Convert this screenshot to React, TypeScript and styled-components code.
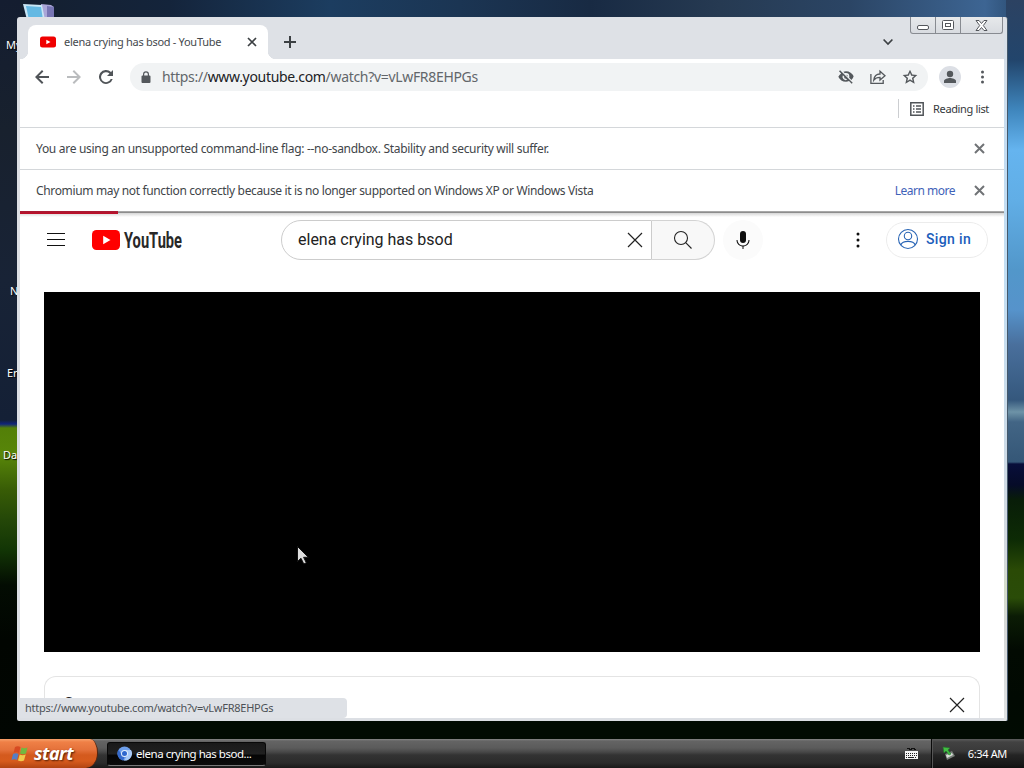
import type { ReactNode } from 'react';
import styled, { createGlobalStyle } from 'styled-components';

const uiFont = `'Noto Sans', 'Open Sans', sans-serif`;

const GlobalStyle = createGlobalStyle`
  * {
    box-sizing: border-box;
  }

  body {
    margin: 0;
    overflow: hidden;
    background: #000;
    font-family: ${uiFont};
  }

  svg {
    display: block;
    flex-shrink: 0;
  }
`;

const Screen = styled.div`
  width: 1024px;
  height: 768px;
  display: flex;
  flex-direction: column;
  overflow: hidden;
`;

// grassy hill wallpaper, only its edges show round the window
const Desktop = styled.main`
  flex: 1;
  position: relative;
  overflow: hidden;
  background:
    linear-gradient(180deg, #2c4262 0, #22456c 60px, #3f86bd 110px, #65b4ef 150px, #61aee6 200px, #5297ca 270px, #5693cb 310px, #496f9c 345px, #35587d 400px, #6e93a7 412px, #426585 422px, #355777 462px, #080e3a 464px, #060b28 485px, #081d08 500px, #0d2b05 540px, #2a4a06 570px, #2a4c08 598px, #0b1c05 616px, #020a02 650px, #010902 700px, #010b02 739px) 1006px 0 / 18px 739px no-repeat,
    linear-gradient(180deg, #141d30 0, #18212e 130px, #182336 280px, #142036 420px, #10247c 424px, #537f08 428px, #588609 455px, #385c06 490px, #244708 520px, #123505 550px, #030c02 585px, #010501 640px, #010602 739px) 0 0 / 20px 739px no-repeat,
    linear-gradient(90deg, #141e2e 0, #14243b 170px, #1c3d60 330px, #1b3553 460px, #182a43 590px, #263a52 720px, #2b4565 850px, #3d6593 985px, #28486c 1024px) 0 0 / 100% 20px no-repeat,
    #010b02;
`;

const ShortcutLabel = styled.span<{ $x: number; $y: number }>`
  position: absolute;
  left: ${(p) => p.$x}px;
  top: ${(p) => p.$y}px;
  color: #fff;
  font-size: 11px;
  line-height: 14px;
  text-shadow: 1px 1px 1px #000;
`;

const ComputerIcon = styled.svg`
  position: absolute;
  left: 22px;
  top: 2px;
`;

const Window = styled.section`
  position: absolute;
  left: 17px;
  top: 17px;
  width: 991px;
  height: 704px;
  display: flex;
  flex-direction: column;
  padding: 0 3px 3px;
  border-radius: 3px 3px 2px 2px;
  border-right: 1px solid #46596b;
  overflow: hidden;
  background:
    linear-gradient(180deg, #dee1e6 0, #c3dcf2 130px, #c3dff4 260px, #cddbe7 440px, #d4d9df 540px, #d5ddc9 570px, #d6d8d8 610px, #dfe2e3 100%) right / 4px 100% no-repeat,
    #dcdfe4;
`;

const TabStrip = styled.div`
  height: 42px;
  flex-shrink: 0;
  display: flex;
  background: #dee1e6;
  padding: 8px 1px 0 8px;
`;

const Tab = styled.div`
  position: relative;
  width: 240px;
  height: 34px;
  display: flex;
  align-items: center;
  padding: 0 11px 1px 12px;
  border-radius: 8px 8px 0 0;
  background: #fff;

  &::before,
  &::after {
    content: '';
    position: absolute;
    bottom: 0;
    width: 8px;
    height: 8px;
  }

  &::before {
    left: -8px;
    background: radial-gradient(circle at 0 0, #dee1e6 8px, #fff 8.5px);
  }

  &::after {
    right: -8px;
    background: radial-gradient(circle at 100% 0, #dee1e6 8px, #fff 8.5px);
  }
`;

const TabTitle = styled.span`
  flex: 1;
  margin-left: 8px;
  font-size: 11px;
  letter-spacing: -0.29px;
  white-space: nowrap;
  color: #45494d;
`;

const NewTab = styled.div`
  padding: 11px 0 0 16px;
  flex: 1;
`;

const TabSearch = styled.div`
  padding: 13px 17px 0 0;
`;

const WindowControls = styled.div`
  display: flex;
  height: 17px;
  margin-top: -8px;
  border: 1px solid #888b91;
  border-top: 0;
  border-radius: 0 0 3px 3px;
  background: linear-gradient(#e7e9eb, #d8dbe0);
`;

const WindowControl = styled.div<{ $width: number; $drop?: number }>`
  width: ${(p) => p.$width}px;
  display: flex;
  align-items: center;
  justify-content: center;
  padding-top: ${(p) => p.$drop ?? 0}px;

  & + & {
    border-left: 1px solid #888b91;
  }
`;

const Toolbar = styled.div`
  height: 36px;
  flex-shrink: 0;
  display: flex;
  align-items: center;
  padding: 0 11px 1px 14px;
  background: #fff;
`;

const NavButtons = styled.div`
  display: flex;
  gap: 16px;
  margin-right: 16px;
`;

const Omnibox = styled.div`
  width: 798px;
  height: 28px;
  flex-shrink: 0;
  display: flex;
  align-items: center;
  padding: 0 10px;
  border-radius: 14px;
  background: #f1f3f4;
`;

const Url = styled.span`
  flex: 1;
  margin-left: 10px;
  font-size: 14px;
  letter-spacing: -0.32px;
  color: #62666a;

  b {
    font-weight: 400;
    color: #202124;
  }
`;

const OmniboxActions = styled.div`
  display: flex;
  gap: 16px;
`;

const Avatar = styled.div`
  width: 22px;
  height: 22px;
  margin: 0 16px 0 11px;
  display: flex;
  align-items: center;
  justify-content: center;
  border-radius: 50%;
  background: #dcdfe5;
`;

const BookmarkBar = styled.div`
  height: 33px;
  flex-shrink: 0;
  display: flex;
  align-items: center;
  justify-content: flex-end;
  padding: 0 15px 5px 0;
  border-bottom: 1px solid #d4d7da;
  background: #fff;
`;

const ReadingList = styled.div`
  display: flex;
  align-items: center;
  gap: 8px;
  padding-left: 10px;
  height: 19px;
  border-left: 1px solid #ccced1;
  font-size: 11px;
  letter-spacing: -0.35px;
  color: #35383b;
`;

const InfoBar = styled.div`
  height: 41px;
  flex-shrink: 0;
  display: flex;
  align-items: center;
  padding: 0 19px 0 16px;
  background: #fff;
  font-size: 12px;
  letter-spacing: -0.3px;
  color: #414549;

  & + & {
    height: 42px;
    border-top: 1px solid #d4d7da;
    letter-spacing: -0.35px;
  }
`;

const InfoText = styled.span`
  flex: 1;
`;

const LearnMore = styled.a`
  margin-right: 19px;
  letter-spacing: -0.5px;
  color: #3f62b8;
`;

const Page = styled.div`
  position: relative;
  flex: 1;
  display: flex;
  flex-direction: column;
  background: #fff;
  overflow: hidden;

  &::before {
    content: '';
    position: absolute;
    inset: 0 0 auto;
    height: 6px;
    background: linear-gradient(#a8a8a8 0 1px, #8d8d8d 1px 2px, #d6d6d6 2px, #fff);
  }
`;

const LoadProgress = styled.div`
  position: absolute;
  left: 0;
  top: 0;
  width: 98px;
  height: 3px;
  background: linear-gradient(#a51d35, #c00d27);
`;

const Masthead = styled.header`
  position: relative;
  height: 56px;
  display: flex;
  align-items: center;
  padding: 1px 16px 0 24px;
`;

const Brand = styled.div`
  width: 237px;
  display: flex;
  align-items: center;
  gap: 24px;
`;

const SearchForm = styled.div`
  display: flex;
  width: 434px;
  height: 40px;
`;

const SearchField = styled.div`
  flex: 1;
  display: flex;
  align-items: center;
  justify-content: space-between;
  padding: 0 4px 0 16px;
  border: 1px solid #ccc;
  border-radius: 20px 0 0 20px;
  font: 16px Roboto, sans-serif;
  color: #222;

  span {
    padding-bottom: 1px;
  }
`;

const SearchButton = styled.div`
  width: 63px;
  display: flex;
  align-items: center;
  padding-left: 19px;
  border: 1px solid #d3d3d3;
  border-left: 0;
  border-radius: 0 20px 20px 0;
  background: #f8f8f8;
`;

const VoiceButton = styled.div`
  width: 40px;
  height: 40px;
  margin-left: 8px;
  display: flex;
  align-items: center;
  justify-content: center;
  border-radius: 50%;
  background: #fbfbfb;
`;

const MastheadEnd = styled.div`
  flex: 1;
  display: flex;
  align-items: center;
  justify-content: flex-end;
  gap: 16px;
`;

const SignIn = styled.div`
  width: 102px;
  height: 36px;
  display: flex;
  align-items: center;
  gap: 6px;
  padding: 0 0 1px 9px;
  border: 1px solid #ececec;
  border-radius: 18px;
  font: 500 14px Roboto, sans-serif;
  letter-spacing: 0.35px;
  color: #1a5dbb;
`;

const Player = styled.div`
  height: 360px;
  margin: 25px 24px 24px;
  flex-shrink: 0;
  background: #000;
`;

const Card = styled.div`
  flex: 1;
  margin: 0 24px;
  display: flex;
  align-items: flex-start;
  justify-content: space-between;
  padding: 16px 10px 0 19px;
  border: 1px solid #e4e4e4;
  border-bottom: 0;
  border-radius: 12px 12px 0 0;
`;

const CardHeading = styled.span`
  padding-top: 1px;
  font: 500 16px/20px Roboto, sans-serif;
  color: #222;
`;

const StatusBubble = styled.div`
  position: absolute;
  left: 0;
  bottom: 0;
  width: 327px;
  height: 20px;
  padding: 0 5px;
  border-radius: 0 4px 4px 0;
  background: #dee1e6;
  font-size: 11px;
  line-height: 20px;
  letter-spacing: -0.25px;
  color: #4d5156;
`;

const Pointer = styled.svg`
  position: absolute;
  left: 297px;
  top: 546px;
`;

const Taskbar = styled.footer`
  height: 29px;
  display: flex;
  background: linear-gradient(#858585 0, #646464 2px, #5b5b5b 9px, #484848 13px, #333 16px, #2b2b2b 24px, #191919 29px);
`;

const StartButton = styled.div`
  width: 98px;
  display: flex;
  align-items: center;
  gap: 3px;
  padding-left: 10px;
  border-radius: 0 8px 12px 0 / 0 14px 15px 0;
  border-right: 1px solid #57260f;
  background: linear-gradient(#f7a06b 0, #ef8046 3px, #e4713a 11px, #d45a1e 16px, #d75b1d 22px, #b14412 29px);
  color: #fff;
  font: italic 700 18px/28px 'Noto Sans', sans-serif;
  letter-spacing: -0.5px;
  text-shadow: 1px 1px 2px #4d1b05;

  span {
    padding-bottom: 2px;
  }
`;

const TaskButton = styled.div`
  width: 159px;
  height: 24px;
  margin: 3px 0 0 9px;
  display: flex;
  align-items: center;
  gap: 4px;
  padding: 0 0 1px 9px;
  border: 1px solid #080808;
  border-bottom-color: #777;
  border-radius: 3px;
  background: linear-gradient(#191919, #202020 50%, #050505 55%, #0b0b0b);
  font-size: 11.5px;
  letter-spacing: -0.47px;
  white-space: nowrap;
  color: #fff;
`;

const LanguageBar = styled.div`
  flex: 1;
  display: flex;
  justify-content: flex-end;
  padding: 8px 13px 0 0;
`;

const Tray = styled.div`
  width: 93px;
  display: flex;
  align-items: center;
  justify-content: space-between;
  padding: 0 17px 1px 10px;
  border-left: 1px solid #0a0a0a;
  background: linear-gradient(#5c5c5c 0, #424242 3px, #393939 12px, #242424 16px, #191919 25px, #101010);
  box-shadow: inset 1px 0 #555;
  font-size: 11px;
  letter-spacing: -0.35px;
  color: #fff;
`;

interface IconProps {
  size: number;
  color?: string;
  view?: number;
  children: ReactNode;
}

function Icon({ size, color = '#54585c', view = 24, children }: IconProps) {
  return (
    <svg width={size} height={size} viewBox={`0 0 ${view} ${view}`} fill={color}>
      {children}
    </svg>
  );
}

function Cross({ size, color, width }: { size: number; color: string; width: number }) {
  return (
    <svg width={size} height={size} viewBox={`0 0 ${size} ${size}`} fill="none" stroke={color} strokeWidth={width}>
      <path d={`M1 1 ${size - 1} ${size - 1}M${size - 1} 1 1 ${size - 1}`} />
    </svg>
  );
}

function ThinCross() {
  return (
    <svg width="24" height="24" viewBox="0 0 24 24" stroke="#222">
      <path d="m5 5 14 14M19 5 5 19" strokeWidth="1.2" />
    </svg>
  );
}

function YouTubeLogo() {
  return (
    <svg width="100" height="28" viewBox="0 -3 100 28">
      <rect x="0" y="1" width="28" height="20" rx="4.5" fill="#f00" />
      <path fill="#fff" d="m11.2 6.8 7.3 4.2-7.3 4.2z" />
      <text
        x="32"
        y="19"
        fontFamily="Roboto, sans-serif"
        fontWeight="700"
        fontSize="21.5"
        fill="#282828"
        textLength="58"
        lengthAdjust="spacingAndGlyphs"
      >
        YouTube
      </text>
    </svg>
  );
}

function BrowserTabs() {
  return (
    <TabStrip>
      <Tab>
        <svg width="16" height="12" viewBox="0 0 16 12">
          <rect width="16" height="11" y=".5" rx="2.5" fill="#f00000" />
          <path fill="#fff" d="M6.3 3.7v4.6L10.5 6z" />
        </svg>
        <TabTitle>elena crying has bsod - YouTube</TabTitle>
        <Cross size={10} color="#3c4043" width={1.7} />
      </Tab>
      <NewTab>
        <svg width="12" height="12" viewBox="0 0 12 12" stroke="#3c4043" strokeWidth="2">
          <path d="M6 0v12M0 6h12" />
        </svg>
      </NewTab>
      <TabSearch>
        <svg width="10" height="8" viewBox="0 0 10 8" fill="none" stroke="#3c4043" strokeWidth="1.7">
          <path d="m.6 1.5 4.4 4.5 4.4-4.5" />
        </svg>
      </TabSearch>
      <WindowControls>
        <WindowControl $width={24} $drop={5}>
          <svg width="12" height="5" viewBox="0 0 12 5">
            <rect x=".5" y=".5" width="11" height="4" rx="1.5" fill="#fff" stroke="#54575c" />
          </svg>
        </WindowControl>
        <WindowControl $width={25}>
          <svg width="12" height="10" viewBox="0 0 12 10" fill="#fff" stroke="#54575c">
            <rect x=".5" y=".5" width="11" height="9" rx="1" />
            <rect x="3.5" y="3.5" width="5" height="3" />
          </svg>
        </WindowControl>
        <WindowControl $width={42}>
          <svg width="13" height="11" viewBox="0 0 13 11">
            <path d="M1 .5h3l2.5 3L9 .5h3L8.3 5.5l3.7 5H9l-2.5-3-2.5 3H1l3.7-5z" fill="#fff" stroke="#54575c" />
          </svg>
        </WindowControl>
      </WindowControls>
    </TabStrip>
  );
}

function AddressBar() {
  return (
    <Toolbar>
      <NavButtons>
        <Icon size={16} view={16} color="#505458">
          <path d="M15 7H4.8l4.6-4.6L8 1 1 8l7 7 1.4-1.4L4.8 9H15z" />
        </Icon>
        <Icon size={16} view={16} color="#babcbe">
          <path d="M1 7h10.2L6.6 2.4 8 1l7 7-7 7-1.4-1.4L11.2 9H1z" />
        </Icon>
        <Icon size={16} view={16} color="#505458">
          <path d="M13 3A7 7 0 1 0 14.7 10h-2a5 5 0 1 1-1.2-5.5L9 7h6V1z" />
        </Icon>
      </NavButtons>
      <Omnibox>
        <Icon size={12} view={12}>
          <path d="M9.5 4.5H9V3.3a3 3 0 0 0-6 0v1.2h-.5a1 1 0 0 0-1 1V11a1 1 0 0 0 1 1h7a1 1 0 0 0 1-1V5.5a1 1 0 0 0-1-1zM4.2 3.3a1.8 1.8 0 0 1 3.6 0v1.2H4.2z" />
        </Icon>
        <Url>
          https://<b>www.youtube.com</b>/watch?v=vLwFR8EHPGs
        </Url>
        <OmniboxActions>
          <Icon size={16}>
            <path d="M12 6a5 5 0 0 1 5 5c0 .7-.1 1.3-.4 1.9l3.5 3.5A13 13 0 0 0 23.5 11C21.5 6.5 17.2 3.5 12 3.5c-1.4 0-2.7.3-4 .7l2.2 2.2C10.8 6.1 11.4 6 12 6zM1.5 3.5l3.2 3.2A12 12 0 0 0 .5 11.5c2 4.5 6.3 7.5 11.5 7.5 1.6 0 3.1-.3 4.5-.9l4 4 1.6-1.6L3.1 2zm5.8 5.9 1.9 1.8A3 3 0 0 0 12 14.7l1.7 1.6a5 5 0 0 1-6.4-6.9zM12 8.5l3 3a3 3 0 0 0-3-3z" />
          </Icon>
          <svg width="16" height="16" viewBox="0 0 16 16" fill="none" stroke="#54585c" strokeWidth="1.3">
            <path d="M.9 5v9.3h12.3V11M3.8 11c.5-4 2.7-6 6.2-6V2.2l5 4.5-5 4.4V8.3c-3 0-4.8.8-6.2 2.7z" />
          </svg>
          <Icon size={16}>
            <path d="m23 9-7.6-.7L12 1 8.6 8.3 1 9l5.7 5.2L5 22l7-4.1 7 4.1-1.7-7.8zm-11 6.5-3.9 2.4 1-4.5L5.7 10.4l4.5-.4L12 5.8l1.8 4.2 4.5.4-3.4 3 1 4.5z" />
          </Icon>
        </OmniboxActions>
      </Omnibox>
      <Avatar>
        <Icon size={14} view={14}>
          <circle cx="7" cy="4" r="3.2" />
          <path d="M1 13v-2c0-2 4-3 6-3s6 1 6 3v2z" />
        </Icon>
      </Avatar>
      <Icon size={16} view={16}>
        <circle cx="5.5" cy="3" r="1.5" />
        <circle cx="5.5" cy="8" r="1.5" />
        <circle cx="5.5" cy="13" r="1.5" />
      </Icon>
    </Toolbar>
  );
}

function SearchHeader() {
  return (
    <Masthead>
      <Brand>
        <svg width="24" height="24" viewBox="0 0 24 24" stroke="#111">
          <path d="M3 5.5h18M3 11.5h18M3 17.5h18" />
        </svg>
        <YouTubeLogo />
      </Brand>
      <SearchForm>
        <SearchField>
          <span>elena crying has bsod</span>
          <ThinCross />
        </SearchField>
        <SearchButton>
          <svg width="24" height="24" viewBox="0 0 24 24" fill="none" stroke="#222" strokeWidth="1.1">
            <circle cx="10" cy="10" r="6.5" />
            <path d="m14.7 14.7 5.8 5.8" />
          </svg>
        </SearchButton>
      </SearchForm>
      <VoiceButton>
        <Icon size={24} color="#0f0f0f">
          <path d="M12 3a3 3 0 0 0-3 3v6a3 3 0 0 0 6 0V6a3 3 0 0 0-3-3z" />
          <path d="M18.5 12h-1a5.5 5.5 0 0 1-11 0h-1c0 3.4 2.6 6.2 6 6.5V21h1v-2.5c3.4-.3 6-3.1 6-6.5z" />
        </Icon>
      </VoiceButton>
      <MastheadEnd>
        <Icon size={24} color="#0f0f0f">
          <circle cx="12" cy="6" r="1.5" />
          <circle cx="12" cy="12" r="1.5" />
          <circle cx="12" cy="18" r="1.5" />
        </Icon>
        <SignIn>
          <svg width="24" height="24" viewBox="0 0 24 24" fill="none" stroke="#2864b5" strokeWidth="1.1">
            <circle cx="12" cy="12" r="9.5" />
            <circle cx="12" cy="9" r="3.7" />
            <path d="M4.8 18c1-2.7 4-3.6 7.2-3.6s6.2.9 7.2 3.6" />
          </svg>
          Sign in
        </SignIn>
      </MastheadEnd>
    </Masthead>
  );
}

function StartFlag() {
  return (
    <svg width="21" height="18" viewBox="0 0 21 18">
      <path fill="#d74b22" d="M5 2c2-1.3 3.8-1 5.5 0L9 8C7.3 7 5.5 7 3.5 8z" />
      <path fill="#72b840" d="M11.5 2.5c2 1 3.8 1 6 0L16 8.5c-2.2 1-4 1-6 0z" />
      <path fill="#557ec5" d="M3 9c2-1 3.7-1 5.5 0L7 15c-1.7-1-3.5-1-5.5 0z" />
      <path fill="#efc94c" d="M9.7 9.5c2 1 3.8 1 6 0L14 15.5c-2 1-3.9 1-6 0z" />
    </svg>
  );
}

function WindowsTaskbar() {
  return (
    <Taskbar>
      <StartButton>
        <StartFlag />
        <span>start</span>
      </StartButton>
      <TaskButton>
        <svg width="15" height="15" viewBox="0 0 15 15">
          <circle cx="7.5" cy="7.5" r="7" fill="#6d9eea" />
          <path d="M7.5 4H14A7 7 0 0 1 7 14.5l3.3-5z" fill="#a9caf7" />
          <path d="M1.6 3.7 4.7 9l2.8 2-1.4 3.4A7 7 0 0 1 1.6 3.7z" fill="#3569cb" />
          <circle cx="7.5" cy="7.5" r="3.5" fill="#e2eefc" />
          <circle cx="7.5" cy="7.5" r="2.5" fill="#2f67ce" />
        </svg>
        elena crying has bsod...
      </TaskButton>
      <LanguageBar>
        <svg width="14" height="13" viewBox="0 0 14 13" shapeRendering="crispEdges">
          <path d="M3 1.5h2v1h2v-1h3v1h2" fill="none" stroke="#111" />
          <path fill="#f5f5f5" d="M1 4h13v8H1z" />
          <path d="M2 6.5h11M2 8.5h11" stroke="#222" strokeDasharray="1 1" />
          <path d="M2 10.5h1m1 0h6m1 0h1" stroke="#222" />
        </svg>
      </LanguageBar>
      <Tray>
        <svg width="14" height="16" viewBox="0 0 14 16">
          <path d="m3 9 7-3 3 5-8 4z" fill="#777e78" />
          <path d="m4 10 6-2 1 2-6 3z" fill="#d8ded7" />
          <path d="m1 2 7 1-2 2 3 4-2 1-3-4-2 2z" fill="#42bd43" stroke="#22772a" strokeWidth=".6" />
        </svg>
        6:34 AM
      </Tray>
    </Taskbar>
  );
}

function App() {
  return (
    <Screen>
      <GlobalStyle />
      <Desktop>
        <ComputerIcon width="34" height="18" viewBox="0 0 34 18">
          <path d="m19 2 10 1 3 2v13H19z" fill="#aaa6d8" />
          <path d="m25 4 7 1v13h-7z" fill="#7775b4" />
          <path d="m1 2 19 1 3 15H5z" fill="#c8e6f5" />
          <path d="m4 4 15 1 2 13H7z" fill="#64b9e3" />
        </ComputerIcon>
        <ShortcutLabel $x={6} $y={38}>My</ShortcutLabel>
        <ShortcutLabel $x={10} $y={284}>N</ShortcutLabel>
        <ShortcutLabel $x={7} $y={366}>Er</ShortcutLabel>
        <ShortcutLabel $x={3} $y={448}>Da</ShortcutLabel>
        <Window>
          <BrowserTabs />
          <AddressBar />
          <BookmarkBar>
            <ReadingList>
              <svg width="16" height="16" viewBox="0 0 16 16" fill="none" stroke="#505458" strokeWidth="1.5">
                <path d="M1.8 1.8h12.4v12.4H1.8zM4 5h1.5M4 8h1.5M4 11h1.5M7 5h5M7 8h5M7 11h5" />
              </svg>
              Reading list
            </ReadingList>
          </BookmarkBar>
          <InfoBar>
            <InfoText>
              You are using an unsupported command-line flag: --no-sandbox. Stability and security will suffer.
            </InfoText>
            <Cross size={11} color="#707376" width={2} />
          </InfoBar>
          <InfoBar>
            <InfoText>
              Chromium may not function correctly because it is no longer supported on Windows XP or Windows Vista
            </InfoText>
            <LearnMore>Learn more</LearnMore>
            <Cross size={11} color="#707376" width={2} />
          </InfoBar>
          <Page>
            <LoadProgress />
            <SearchHeader />
            <Player />
            <Card>
              <CardHeading>S</CardHeading>
              <ThinCross />
            </Card>
            <StatusBubble>https://www.youtube.com/watch?v=vLwFR8EHPGs</StatusBubble>
          </Page>
        </Window>
        <Pointer width="12" height="19" viewBox="0 0 12 19">
          <path d="M.5.5v15l3.5-3.2L6.8 18l2.5-1.2L6.6 11.3h4.7z" fill="#ddd" stroke="#111" />
        </Pointer>
      </Desktop>
      <WindowsTaskbar />
    </Screen>
  );
}

export default App;
